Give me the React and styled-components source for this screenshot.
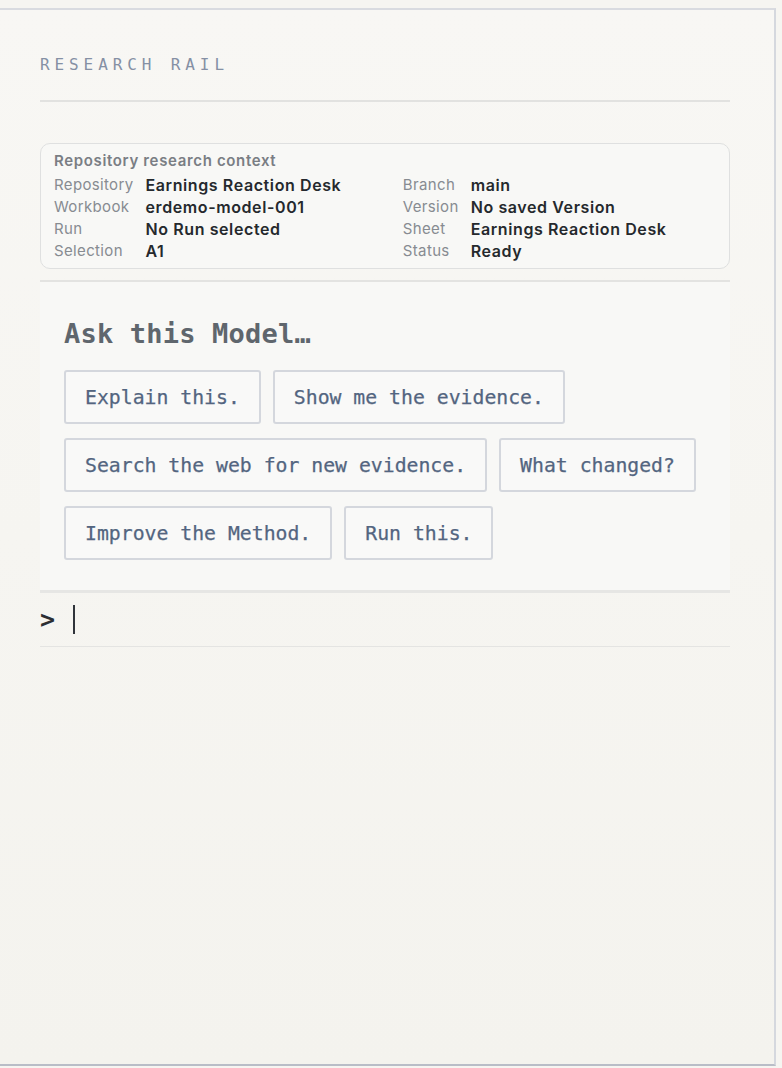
import React from "react";
import styled, { createGlobalStyle } from "styled-components";

const mono = `"DejaVu Sans Mono", "Liberation Mono", monospace`;
const sans = `Inter, "Noto Sans", "Liberation Sans", sans-serif`;

const GlobalStyle = createGlobalStyle`
  html, body {
    margin: 0;
    padding: 0;
    background: #f6f5f1;
  }
  body {
    font-family: ${sans};
  }
`;

const context = [
  ["Repository", "Earnings Reaction Desk", "Branch", "main"],
  ["Workbook", "erdemo-model-001", "Version", "No saved Version"],
  ["Run", "No Run selected", "Sheet", "Earnings Reaction Desk"],
  ["Selection", "A1", "Status", "Ready"],
];

const prompts = [
  "Explain this.",
  "Show me the evidence.",
  "Search the web for new evidence.",
  "What changed?",
  "Improve the Method.",
  "Run this.",
];

const Page = styled.div`
  height: 100vh;
  padding: 8px 6px 2px 0;
  box-sizing: border-box;
  display: flex;
  flex-direction: column;
`;

const Rail = styled.aside`
  flex: 1;
  display: flex;
  flex-direction: column;
  padding: 0 44px 0 40px;
  border-top: 2px solid #d9dbe0;
  border-right: 2px solid #d5d8de;
  border-bottom: 2px solid #b9bdc7;
  background: linear-gradient(#f8f7f4, #f4f3ee);
`;

const Header = styled.header`
  padding: 46px 0 26px;
  border-bottom: 2px solid #e2e2e0;
`;

const Eyebrow = styled.h2`
  margin: 0;
  font-family: ${mono};
  font-size: 16px;
  line-height: 18px;
  font-weight: 500;
  letter-spacing: 4.9px;
  color: #8590a4;
`;

const Card = styled.section`
  margin-top: 41px;
  padding: 8px 13px 6px;
  border: 1px solid #dfe0e0;
  border-radius: 10px;
  background: #f8f8f6;
`;

const CardTitle = styled.div`
  font-size: 15px;
  line-height: 18px;
  font-weight: 600;
  letter-spacing: 0.65px;
  color: #7a7e84;
  margin-bottom: 4px;
`;

const Grid = styled.dl`
  margin: 0;
  display: grid;
  grid-template-columns: max-content 1fr max-content 1fr;
  column-gap: 12px;
`;

const Label = styled.dt`
  font-size: 15px;
  line-height: 22px;
  letter-spacing: 0.35px;
  color: #878b91;
`;

const Value = styled.dd`
  margin: 0;
  font-size: 16px;
  line-height: 22px;
  font-weight: 600;
  letter-spacing: 0.6px;
  color: #25292d;
  white-space: nowrap;
`;

const Divider = styled.div`
  margin-top: 11px;
  height: 2px;
  background: #e3e3e1;
`;

const AskPanel = styled.section`
  padding: 33px 24px 30px;
  background: #f8f8f6;
`;

const AskTitle = styled.h3`
  margin: 0 0 17px;
  font-family: ${mono};
  font-size: 27px;
  line-height: 38px;
  font-weight: 700;
  letter-spacing: 0.2px;
  color: #5f666d;
`;

const Chips = styled.div`
  display: flex;
  flex-wrap: wrap;
  column-gap: 12px;
  row-gap: 14px;
`;

const Chip = styled.button`
  height: 54px;
  padding: 0 19px;
  border: 2px solid #d4d7dd;
  border-radius: 3px;
  background: #f9f9f8;
  font-family: ${mono};
  font-size: 19.8px;
  color: #536580;
  -webkit-text-stroke: 0.25px #536580;
  cursor: pointer;
`;

const PromptRow = styled.div`
  display: flex;
  align-items: center;
  gap: 18px;
  height: 53px;
  border-top: 3px solid #e6e6e4;
  border-bottom: 1px solid #e4e4e2;
`;

const Caret = styled.span`
  font-family: ${mono};
  font-size: 25px;
  font-weight: 700;
  color: #2b2e33;
`;

const Cursor = styled.span`
  width: 2px;
  height: 29px;
  background: #30343a;
`;

export default function App() {
  return (
    <Page>
      <GlobalStyle />
      <Rail>
        <Header>
          <Eyebrow>RESEARCH RAIL</Eyebrow>
        </Header>
        <Card>
          <CardTitle>Repository research context</CardTitle>
          <Grid>
            {context.map(([l1, v1, l2, v2]) => (
              <React.Fragment key={l1}>
                <Label>{l1}</Label>
                <Value>{v1}</Value>
                <Label>{l2}</Label>
                <Value>{v2}</Value>
              </React.Fragment>
            ))}
          </Grid>
        </Card>
        <Divider />
        <AskPanel>
          <AskTitle>Ask this Model…</AskTitle>
          <Chips>
            {prompts.map((p) => (
              <Chip key={p}>{p}</Chip>
            ))}
          </Chips>
        </AskPanel>
        <PromptRow>
          <Caret>&gt;</Caret>
          <Cursor />
        </PromptRow>
      </Rail>
    </Page>
  );
}
